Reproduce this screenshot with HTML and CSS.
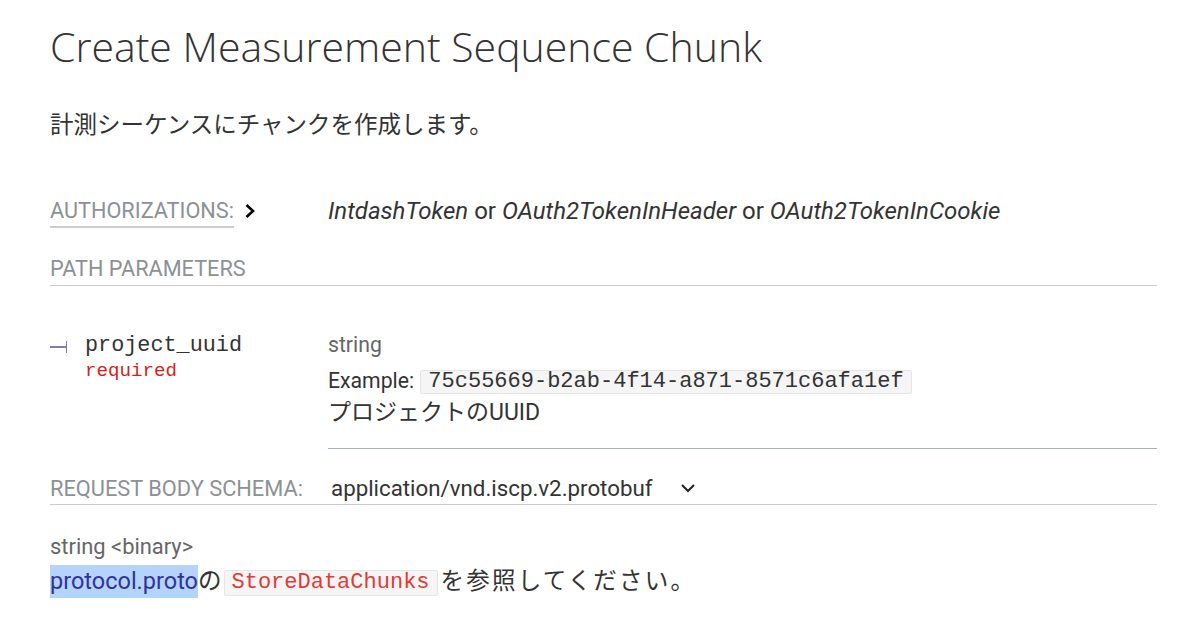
FILE: index.html
```html
<!DOCTYPE html>
<html lang="ja">
<head>
<meta charset="utf-8">
<title>Create Measurement Sequence Chunk</title>
<link rel="stylesheet" href="styles.css">
</head>
<body>
<div class="page">
  <h1 class="title">Create Measurement Sequence Chunk</h1>
  <p class="desc">計測シーケンスにチャンクを作成します。</p>

  <div class="auth">
    <div class="auth-label">
      <span class="auth-text">AUTHORIZATIONS:</span>
      <svg class="chev-right" width="12" height="16" viewBox="0 0 12 16"><path d="M2.5 2 L9 8 L2.5 14" fill="none" stroke="#000" stroke-width="2.6"/></svg>
    </div>
    <div class="auth-values"><i>IntdashToken</i> or <i>OAuth2TokenInHeader</i> or <i>OAuth2TokenInCookie</i></div>
  </div>

  <h5 class="section">PATH PARAMETERS</h5>

  <div class="param">
    <div class="param-name">
      <span class="marker"></span>
      <div class="name-text">
        <div class="mono name">project_uuid</div>
        <div class="mono req">required</div>
      </div>
    </div>
    <div class="param-detail">
      <div class="type">string</div>
      <div class="example">Example: <code class="code">75c55669-b2ab-4f14-a871-8571c6afa1ef</code></div>
      <div class="pdesc">プロジェクトのUUID</div>
    </div>
  </div>

  <div class="schema">
    <span class="schema-label">REQUEST BODY SCHEMA:</span>
    <span class="schema-value">application/vnd.iscp.v2.protobuf</span>
    <svg class="chev-down" width="16" height="12" viewBox="0 0 16 12"><path d="M2 3 L8 9 L14 3" fill="none" stroke="#222" stroke-width="2"/></svg>
  </div>

  <div class="btype">string &lt;binary&gt;</div>
  <p class="bdesc"><a class="link">protocol.proto</a>の<code class="code red">StoreDataChunks</code><span class="tail">を参照してください。</span></p>
</div>
</body>
</html>
```

FILE: styles.css
```css
html, body {
  margin: 0;
  padding: 0;
  background: #fff;
}
body {
  font-family: Roboto, "Noto Sans CJK JP", sans-serif;
  color: #333;
}
.page {
  padding: 0 43px 0 50px;
}
.title {
  margin: 22px 0 0;
  font-family: "Open Sans", "Noto Sans CJK JP", sans-serif;
  font-weight: 300;
  font-size: 41px;
  line-height: 48px;
  color: #333;
}
.desc {
  margin: 40px 0 0;
  font-size: 23.5px;
  line-height: 30px;
  color: #333;
}
.auth {
  display: flex;
  margin-top: 56px;
  line-height: 30px;
}
.auth-label {
  width: 278px;
  display: flex;
  align-items: center;
  flex-shrink: 0;
}
.auth-text {
  font-size: 21.7px;
  color: #8c9196;
  border-bottom: 2px solid #ccc;
  height: 30px;
}
.chev-right {
  margin-left: 10px;
  margin-top: -2px;
}
.auth-values {
  font-size: 24px;
  color: #333;
}
.section {
  margin: 26px 0 0;
  font-weight: 400;
  font-size: 21.7px;
  line-height: 30px;
  color: #8c9196;
  padding-bottom: 1px;
  border-bottom: 1px solid #ccc;
}
.param {
  display: flex;
  margin-top: 44px;
}
.param-name {
  width: 278px;
  flex-shrink: 0;
  display: flex;
  align-items: flex-start;
}
.marker {
  position: relative;
  display: block;
  width: 16px;
  height: 12px;
  margin-top: 11px;
  border-right: 1px solid #7c7cbb;
  flex-shrink: 0;
}
.marker::before {
  content: "";
  position: absolute;
  left: 0;
  right: 0;
  top: 5px;
  height: 1.5px;
  background: #7c7cbb;
}
.name-text {
  margin-left: 18px;
  padding-top: 3px;
}
.mono {
  font-family: "Liberation Mono", "Courier New", monospace;
}
.name {
  font-size: 21.8px;
  line-height: 26px;
  color: #333;
}
.req {
  font-size: 19.2px;
  line-height: 24px;
  color: #d41f1c;
}
.param-detail {
  flex: 1;
  border-bottom: 1px solid #9fb4be;
  padding: 2px 0 22px;
  font-size: 21.2px;
}
.type {
  line-height: 26px;
  color: #666;
}
.example {
  margin-top: 10px;
  line-height: 26px;
}
.code {
  font-family: "Liberation Mono", "Courier New", monospace;
  font-size: 22px;
  background: #f5f5f5;
  border: 1px solid #e6e6e6;
  border-radius: 2px;
  padding: 0 7px;
  line-height: 22px;
  display: inline-block;
  vertical-align: middle;
  margin-left: 1px;
}
.pdesc {
  margin-top: 6px;
  line-height: 26px;
  font-size: 23px;
}
.schema {
  display: flex;
  align-items: center;
  margin-top: 24px;
  height: 30px;
  padding-bottom: 1px;
  border-bottom: 1px solid #ccc;
}
.schema-label {
  width: 281px;
  flex-shrink: 0;
  font-size: 21.8px;
  color: #8c9196;
}
.schema-value {
  font-size: 22.3px;
  color: #333;
}
.chev-down {
  margin-left: 28px;
}
.btype {
  margin-top: 28px;
  font-size: 21.9px;
  line-height: 28px;
  color: #666;
}
.bdesc {
  margin: 3px 0 0;
  font-size: 23.5px;
  line-height: 34px;
}
.link {
  color: #32329f;
  background: #b4d4fc;
  display: inline-block;
  line-height: 33px;
}
.red {
  color: #e53935;
  margin: 0 3px 0 2px;
  padding: 1px 7px;
}
.tail {
  letter-spacing: 2.2px;
}
```
